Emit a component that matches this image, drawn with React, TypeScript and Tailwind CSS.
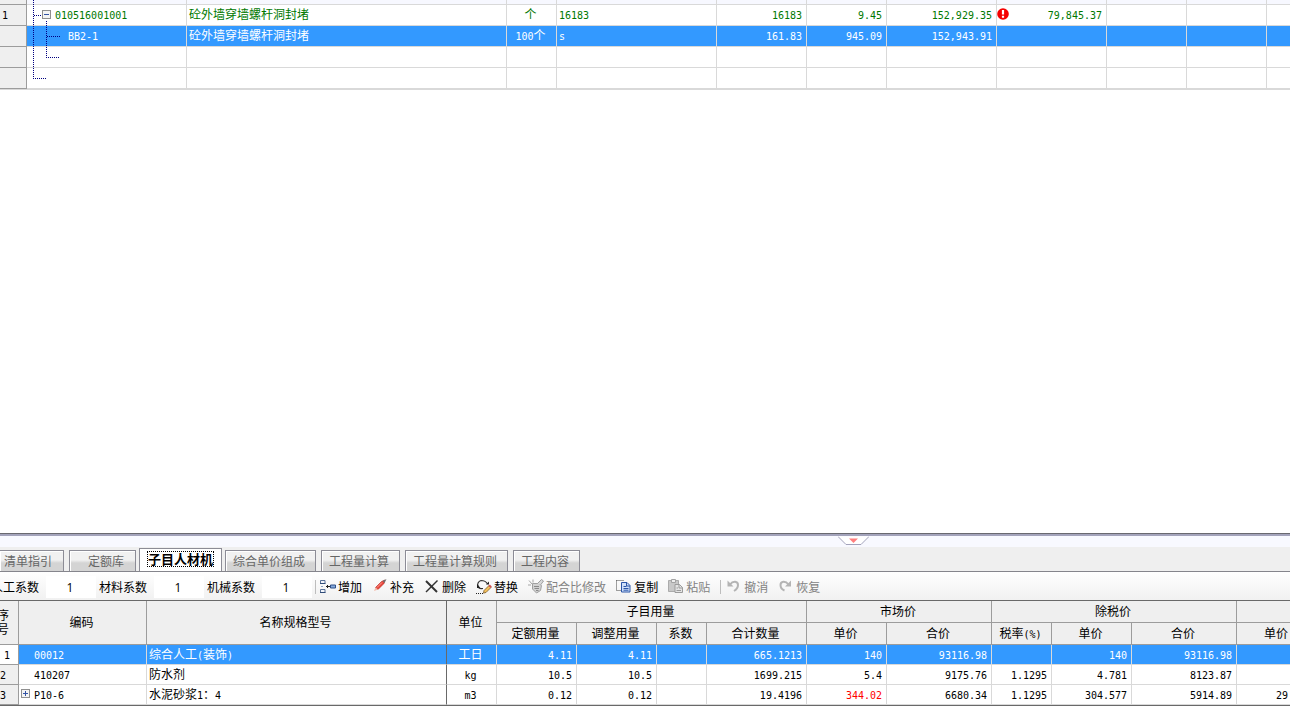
import React from "react";

const MONO = "font-['DejaVu_Sans_Mono','Noto_Sans_CJK_SC',monospace] text-[10px] leading-none";

/** Sets half-width runs at half the width of a Chinese character. */
function Mixed({ text }: { text: string }) {
  const parts = text.split(/([\x20-\x7e]+)/).filter(Boolean);
  return (
    <>
      {parts.map((part, i) =>
        /^[\x20-\x7e]+$/.test(part) ? (
          <span key={i} className={MONO}>
            {part}
          </span>
        ) : (
          <React.Fragment key={i}>{part}</React.Fragment>
        ),
      )}
    </>
  );
}

function Toggle({ open, label }: { open: boolean; label: string }) {
  return (
    <button type="button" aria-label={label} aria-expanded={open} className="block size-[9px] shrink-0">
      <svg viewBox="0 0 9 9" className="block size-[9px]" shapeRendering="crispEdges">
        <rect x=".5" y=".5" width="8" height="8" fill="#f4f4f4" stroke="#8f8f8f" />
        <path d={open ? "M2 4.5h5" : "M2 4.5h5M4.5 2v5"} stroke="#3354a5" />
      </svg>
    </button>
  );
}

type BillRow = {
  no: string;
  code: string;
  name: string;
  unit: string;
  expr: string;
  nums: string[];
  parent?: boolean;
  warn?: boolean;
  selected?: boolean;
};

const billRows: BillRow[] = [
  {
    no: "1",
    code: "010516001001",
    name: "砼外墙穿墙螺杆洞封堵",
    unit: "个",
    expr: "16183",
    nums: ["16183", "9.45", "152,929.35", "79,845.37", "", "", ""],
    parent: true,
    warn: true,
  },
  {
    no: "",
    code: "BB2-1",
    name: "砼外墙穿墙螺杆洞封堵",
    unit: "100个",
    expr: "s",
    nums: ["161.83", "945.09", "152,943.91", "", "", "", ""],
    selected: true,
  },
  { no: "", code: "", name: "", unit: "", expr: "", nums: ["", "", "", "", "", "", ""] },
  { no: "", code: "", name: "", unit: "", expr: "", nums: ["", "", "", "", "", "", ""] },
];

function WarnIcon() {
  return (
    <svg viewBox="0 0 12 12" className="block size-3 shrink-0" role="img" aria-label="警告">
      <circle cx="6" cy="6" r="5.8" fill="#f50000" />
      <path d="M4.9 2h2.2v4.6H4.9zM4.9 7.8h2.2v2H4.9z" fill="#fff" />
    </svg>
  );
}

function BillGrid() {
  const cell = "h-[21px] border-r border-b border-[#d9d9d9] p-0 pb-[2px] leading-4 whitespace-nowrap last:border-r-0";
  return (
    <div className="relative overflow-hidden border-b border-[#d9d9d9]">
      <table className="w-full table-fixed border-separate border-spacing-0">
        <colgroup>
          <col className="w-[27px]" />
          <col className="w-[160px]" />
          <col className="w-[320px]" />
          <col className="w-[50px]" />
          <col className="w-[160px]" />
          <col className="w-[90px]" />
          <col className="w-[80px]" />
          <col className="w-[110px]" />
          <col className="w-[110px]" />
          <col className="w-[80px]" />
          <col className="w-[80px]" />
          <col />
        </colgroup>
        <tbody>
          <tr className="bg-[#f7f8ff]">
            <td className="h-[5px] border-r border-b border-[#9c9c9c] bg-[#efefef] p-0" />
            {Array.from({ length: 11 }, (_, i) => (
              <td key={i} className="h-[5px] border-r border-b border-[#d9d9d9] p-0 last:border-r-0" />
            ))}
          </tr>
          {billRows.map((row, r) => (
            <tr key={r} className={row.selected ? "bg-[#3399ff] text-white" : "bg-white text-[#007800]"}>
              <td className="h-[21px] border-r border-b border-[#9c9c9c] bg-[#efefef] p-0 pb-[2px] pl-[2px] leading-4 text-black">
                <Mixed text={row.no} />
              </td>
              <td className={cell}>
                <div className={row.parent ? "flex items-center gap-1 pl-[15px]" : "pl-[41px]"}>
                  {row.parent && <Toggle open label="折叠" />}
                  <span>
                    <Mixed text={row.code} />
                  </span>
                </div>
              </td>
              <td className={cell + " pl-[2px]"}>{row.name}</td>
              <td className={cell + " pr-[2px] text-center"}>
                <Mixed text={row.unit} />
              </td>
              <td className={cell + " pl-[2px]"}>
                <Mixed text={row.expr} />
              </td>
              {row.nums.map((n, i) => (
                <td key={i} className={cell + " pr-1 text-right"}>
                  {i === 3 && row.warn ? (
                    <div className="flex items-center justify-between">
                      <WarnIcon />
                      <span>
                        <Mixed text={n} />
                      </span>
                    </div>
                  ) : (
                    <Mixed text={n} />
                  )}
                </td>
              ))}
            </tr>
          ))}
        </tbody>
      </table>
      <svg
        className="pointer-events-none absolute top-0 left-0 h-[89px] w-[70px]"
        viewBox="0 0 70 89"
        fill="none"
        stroke="#000080"
        strokeDasharray="1 1"
        shapeRendering="crispEdges"
        aria-hidden="true"
      >
        <path d="M33.5 0V78M33 78.5H46M34 15.5H42M46.5 21V57M46 57.5H60M47 36.5H60" />
      </svg>
    </div>
  );
}

function Splitter() {
  return (
    <div className="relative h-[14px] border-t border-[#696970] bg-[#f8f9ff]">
      <div className="h-[2px] bg-[#a3a3bb]" />
      <button type="button" aria-label="收起面板" className="absolute top-[2px] left-[65%] -ml-px block">
        <svg viewBox="0 0 31 9" className="block h-[9px] w-[31px]">
          <path d="M0 .5 8 8.500H23L31 .5" fill="#fff" stroke="#a3a3bb" />
          <path d="M11 2.500H20L15.500 7z" fill="#ff7f7f" />
        </svg>
      </button>
    </div>
  );
}

function Tabs() {
  const base =
    "h-[21px] shrink-0 whitespace-nowrap border border-b-0 border-[#8c8c96] bg-linear-to-b from-[#f1f1f1] from-45% to-[#d4d4d4] to-60% leading-5 text-[#666] shadow-[inset_1px_1px_0_#fff]";
  return (
    <div role="tablist" className="flex h-[25px] items-end overflow-hidden border-b border-[#85858c] bg-[#efefef]">
      <button type="button" role="tab" aria-selected="false" className={base + " border-l-0 pr-[11px] pl-1"}>
        清单指引
      </button>
      <button type="button" role="tab" aria-selected="false" className={base + " ml-[5px] pr-[11px] pl-[18px]"}>
        定额库
      </button>
      <button
        type="button"
        role="tab"
        aria-selected="true"
        className="-mb-px ml-[3px] flex h-6 shrink-0 items-start border border-b-0 border-[#8c8c96] bg-white px-[7px] pt-[2px] text-[13px] font-bold whitespace-nowrap text-black"
      >
        <span className="border border-dotted border-black leading-[14px]">子目人材机</span>
      </button>
      <div className="ml-[3px] flex gap-[5px]">
        {["综合单价组成", "工程量计算", "工程量计算规则", "工程内容"].map((t) => (
          <button key={t} type="button" role="tab" aria-selected="false" className={base + " pr-[10px] pl-[7px]"}>
            {t}
          </button>
        ))}
      </div>
    </div>
  );
}

const icons: Record<string, React.ReactNode> = {
  add: (
    <>
      <path d="M.5 1.500h4.500v3H.5zM.5 10.500h4.500v3H.5z" fill="#f2f5fb" stroke="#5b7398" />
      <path d="M0 4.500h5.500M0 13.500h5.500" stroke="#2f4b78" />
      <path d="M1 7.500h2" stroke="#8fa6c8" />
      <path d="M6 7.500h4M7.500 6v3" stroke="#222" />
      <path d="M10.500 6h5v3h-5z" fill="#86abdf" stroke="#2f4f86" />
    </>
  ),
  pen: (
    <>
      <path d="M3.500 8.500 9.500 2.500 13 1 12 4.500 6 10.500z" fill="#e8463c" stroke="#b3261e" strokeWidth=".6" />
      <path d="M5 8.500 10 3.500" stroke="#ff9b90" />
      <path d="M10.500 2 14.500 0 12.500 4z" fill="#6f6f6f" />
      <path d="M3.500 8.500 6 10.500 2 12z" fill="#f3b9a8" />
    </>
  ),
  del: (
    <>
      <path d="M2 2 13 13" stroke="#333" strokeWidth="2" />
      <path d="M13.500 1.500 2 13" stroke="#333" strokeWidth="1.500" />
    </>
  ),
  swap: (
    <>
      <path d="M2 7.500A4.500 4.500 0 0 1 5 1.500c3 0 5 .5 6.500 3.500" stroke="#333" strokeWidth="1.200" />
      <path d="M1.500 6.500C2 9 4 10 7 9.500" stroke="#333" strokeWidth="1.200" />
      <path d="M10 5.500h3V2.500zM1 5v4h3.500z" fill="#222" />
      <path d="m8 11.500 5-5 2 2-5 5-2.500.6z" fill="#f3c05a" stroke="#6d4a1d" strokeWidth=".7" />
      <path d="m12.500 7 1.300-1.500 2 2L14.500 9z" fill="#d05050" />
      <path d="M0 14.500h7" stroke="#222" strokeDasharray="1 1" />
    </>
  ),
  mix: (
    <>
      <path d="M1 1.500 4 5M5 .5v3M0 6h3" stroke="#a5a5a5" />
      <path d="M4.500 4.500h6l3 2-1 5-4 2.500-4-4z" fill="#d2d2d2" stroke="#a0a0a0" />
      <path d="M6 7.500h5M6.500 9.500h4.500M8 11.500h2.500" stroke="#8a8a8a" />
      <path d="m9.500 4.500 4-4L15.500 2l-3 4" fill="#d8d8d8" stroke="#a0a0a0" />
    </>
  ),
  copy: (
    <>
      <path d="M.5 1.500h7M.5 1.500v10h5" stroke="#444" strokeDasharray="1 1" />
      <path d="M5.500 3.500h5.500l3 3v6.500H5.500z" fill="#cfe0fa" stroke="#2c56a8" />
      <path d="M10.500 3.500v3.500h3.500M7.500 7.500h3M7.500 9.500h5M7.500 11.200h5" stroke="#2c56a8" />
    </>
  ),
  paste: (
    <>
      <path d="M.5 1.500h10v11H.5z" fill="#c8c8c8" stroke="#ababab" />
      <path d="M3.500.5h4v3h-4z" fill="#eee" stroke="#a3a3a3" />
      <path d="M7 5.500h4.500l3 3v5H7z" fill="#e4e4e4" stroke="#9b9b9b" />
      <path d="M11 5.500V9h3.500M8.500 9h1.500M8.500 11.500h4.500" stroke="#9b9b9b" />
    </>
  ),
  undo: (
    <>
      <path d="M4 5.500C7 1.500 12 2 12 6c0 3-1.500 4.500-4 6" stroke="#b4b4b4" strokeWidth="2" />
      <path d="M1.500 1.500v6h6z" fill="#b4b4b4" />
    </>
  ),
  redo: (
    <>
      <path d="M10.500 5.500C7.500 1.500 2.500 2 2.500 6c0 3 1.500 4.500 4 5.500" stroke="#b4b4b4" strokeWidth="2" />
      <path d="M13 1.500v6H7z" fill="#b4b4b4" />
    </>
  ),
};

function ToolButton({ icon, label, disabled }: { icon: string; label: string; disabled?: boolean }) {
  return (
    <button
      type="button"
      disabled={disabled}
      className="flex shrink-0 items-center gap-[2px] leading-4 whitespace-nowrap text-black disabled:text-[#838383]"
    >
      <svg viewBox="0 0 16 16" className="block size-4" fill="none" aria-hidden="true">
        {icons[icon]}
      </svg>
      {label}
    </button>
  );
}

function Toolbar() {
  const sep = "h-[14px] w-px shrink-0 bg-[#bdbdbd]";
  return (
    <div className="flex h-7 items-center overflow-hidden bg-linear-to-b from-white to-[#f1f1f1] pt-[2px]">
      <div className="-ml-[9px] flex shrink-0 gap-[3px]">
        {["人工系数", "材料系数", "机械系数"].map((name) => (
          <label key={name} className="flex items-center gap-[7px] whitespace-nowrap text-black">
            {name}
            <input
              defaultValue="1"
              className="h-[22px] w-[50px] bg-white pr-[2px] text-center font-['Open_Sans',sans-serif] text-[12px] outline-none"
            />
          </label>
        ))}
      </div>
      <div className={sep + " mr-1 ml-[3px]"} />
      <div className="flex gap-[10px]">
        <ToolButton icon="add" label="增加" />
        <ToolButton icon="pen" label="补充" />
        <ToolButton icon="del" label="删除" />
        <ToolButton icon="swap" label="替换" />
        <ToolButton icon="mix" label="配合比修改" disabled />
        <ToolButton icon="copy" label="复制" />
        <ToolButton icon="paste" label="粘贴" disabled />
      </div>
      <div className={sep + " mr-[5px] ml-[10px]"} />
      <div className="flex gap-[10px]">
        <ToolButton icon="undo" label="撤消" disabled />
        <ToolButton icon="redo" label="恢复" disabled />
      </div>
    </div>
  );
}

type ResourceRow = {
  no: string;
  code: string;
  name: string;
  unit: string;
  nums: string[];
  selected?: boolean;
  expandable?: boolean;
  changed?: number;
};

const resources: ResourceRow[] = [
  {
    no: "1",
    code: "00012",
    name: "综合人工(装饰)",
    unit: "工日",
    nums: ["4.11", "4.11", "", "665.1213", "140", "93116.98", "", "140", "93116.98", ""],
    selected: true,
  },
  {
    no: "2",
    code: "410207",
    name: "防水剂",
    unit: "kg",
    nums: ["10.5", "10.5", "", "1699.215", "5.4", "9175.76", "1.1295", "4.781", "8123.87", ""],
  },
  {
    no: "3",
    code: "P10-6",
    name: "水泥砂浆1：4",
    unit: "m3",
    nums: ["0.12", "0.12", "", "19.4196", "344.02", "6680.34", "1.1295", "304.577", "5914.89", "29"],
    expandable: true,
    changed: 4,
  },
];

function ResourceTable() {
  const head =
    "h-[22px] border-r border-b border-[#9c9c9c] bg-[#efefef] p-0 pr-[2px] pb-[2px] font-normal leading-4 whitespace-nowrap";
  const cell = "h-5 border-r border-b border-[#d9d9d9] p-0 pb-[2px] leading-4 whitespace-nowrap";
  const subs = ["定额用量", "调整用量", "系数", "合计数量", "单价", "合价", "税率(%)", "单价", "合价"];
  return (
    <div className="overflow-hidden border-y border-[#696969]">
      <table className="w-full table-fixed border-separate border-spacing-0 text-black">
        <colgroup>
          <col className="w-[19px]" />
          <col className="w-[128px]" />
          <col className="w-[300px]" />
          <col className="w-[50px]" />
          <col className="w-[80px]" />
          <col className="w-[80px]" />
          <col className="w-[50px]" />
          <col className="w-[100px]" />
          <col className="w-[80px]" />
          <col className="w-[105px]" />
          <col className="w-[60px]" />
          <col className="w-[80px]" />
          <col className="w-[105px]" />
          <col />
        </colgroup>
        <thead>
          <tr>
            <th rowSpan={2} className={head + " overflow-hidden"}>
              <span className="-ml-[3px] block w-3 leading-[14px] whitespace-normal">序号</span>
            </th>
            <th rowSpan={2} className={head}>编码</th>
            <th rowSpan={2} className={head + " border-r-[#696969]"}>名称规格型号</th>
            <th rowSpan={2} className={head}>单位</th>
            <th colSpan={4} className={head}>子目用量</th>
            <th colSpan={2} className={head}>市场价</th>
            <th colSpan={3} className={head}>除税价</th>
            <th className={head + " border-r-0"} />
          </tr>
          <tr>
            {subs.map((s, i) => (
              <th key={i} className={head}>
                <Mixed text={s} />
              </th>
            ))}
            <th className={head + " border-r-0 text-right"}>单价</th>
          </tr>
        </thead>
        <tbody>
          {resources.map((row) => (
            <tr key={row.no} className={row.selected ? "bg-[#3399ff] text-white" : "bg-white"}>
              <td
                className={
                  "h-5 border-r border-b border-[#9c9c9c] p-0 pb-[2px] leading-4 text-black " +
                  (row.selected ? "bg-white pl-1" : "bg-[#efefef]")
                }
              >
                <Mixed text={row.no} />
              </td>
              <td className={cell}>
                <div className={row.expandable ? "flex items-center gap-1 pl-[2px]" : "pl-[15px]"}>
                  {row.expandable && <Toggle open={false} label="展开" />}
                  <span>
                    <Mixed text={row.code} />
                  </span>
                </div>
              </td>
              <td className={cell + " border-r-[#696969] pl-[2px]"}>
                <Mixed text={row.name} />
              </td>
              <td className={cell + " pr-[2px] text-center"}>
                <Mixed text={row.unit} />
              </td>
              {row.nums.map((n, i) => (
                <td
                  key={i}
                  className={
                    cell +
                    (i === 9 ? " border-r-0 pr-[2px] text-right" : " pr-1 text-right") +
                    (row.changed === i ? " text-[#ff0000]" : "")
                  }
                >
                  <Mixed text={n} />
                </td>
              ))}
            </tr>
          ))}
        </tbody>
      </table>
    </div>
  );
}

export default function App() {
  return (
    <main className="flex min-h-screen flex-col overflow-hidden bg-white font-['Noto_Sans_CJK_SC',sans-serif] text-[12px]">
      <BillGrid />
      <div className="flex-1" />
      <section className="pb-[18px]">
        <Splitter />
        <Tabs />
        <Toolbar />
        <ResourceTable />
      </section>
    </main>
  );
}
